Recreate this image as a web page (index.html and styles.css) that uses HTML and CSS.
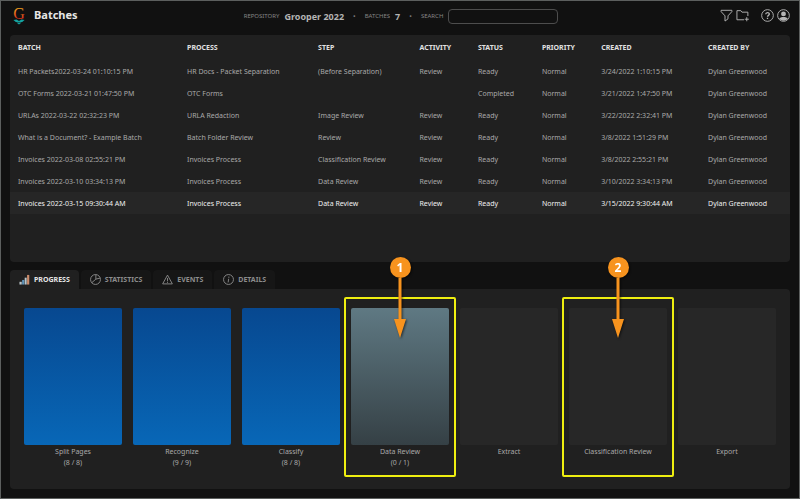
FILE: index.html
```html
<!DOCTYPE html>
<html lang="en">
<head>
    <meta charset="UTF-8">
    <meta name="viewport" content="width=device-width, initial-scale=1.0">
    <title>Batches</title>
    <link rel="stylesheet" href="styles.css">
</head>
<body>
    <header class="topbar">
        <div class="brand">
            <svg class="logo" viewBox="0 0 14 18">
                <defs>
                    <linearGradient id="logoFill" x1="0" y1="0" x2="0" y2="1">
                        <stop offset="0.2" stop-color="#f0a020"/>
                        <stop offset="0.8" stop-color="#d8301c"/>
                    </linearGradient>
                </defs>
                <text class="logo-letter" x="7" y="12" text-anchor="middle" fill="url(#logoFill)">G</text>
                <path d="M1.4 13L4.5 12.6L7 14L9.5 12.6L12.6 13L10.2 15H3.8ZM4.4 15.4H9.6L7 17.4Z" fill="#14a3a0"/>
            </svg>
            <h1>Batches</h1>
        </div>
        <div class="summary">
            <span class="caption">REPOSITORY</span>
            <strong>Grooper 2022</strong>
            <span class="dot">•</span>
            <span class="caption">BATCHES</span>
            <strong>7</strong>
            <span class="dot">•</span>
            <label class="caption" for="search">SEARCH</label>
            <input type="text" id="search">
        </div>
        <div class="actions">
            <button type="button" aria-label="Filter">
                <svg viewBox="0 0 14 14"><path d="M1.2 1.4H12.8V2.8L8.6 7.4V10.6L5.4 13V7.4L1.2 2.8Z"/></svg>
            </button>
            <button type="button" class="new-batch" aria-label="New batch">
                <svg viewBox="0 0 14 14"><path d="M8.6 11.6H1V1.8H5.2L6.4 3.4H12.8V7.6M11.6 8.8V13.2M9.4 11H13.8"/></svg>
            </button>
            <button type="button" aria-label="Help">
                <svg viewBox="0 0 14 14"><circle cx="7" cy="7" r="6.3"/><path d="M5.1 5.7C5.1 3.2 9 3.2 9 5.5C9 6.9 7 6.9 7 8.4M7 9.4V10.8" stroke-width="1.4"/></svg>
            </button>
            <button type="button" aria-label="Account">
                <svg viewBox="0 0 14 14"><circle cx="7" cy="7" r="6.3"/><circle class="solid" cx="7" cy="5.3" r="2.6"/><path class="solid" d="M2.4 10.6C3.4 8 10.6 8 11.6 10.6C9.8 13.2 4.2 13.2 2.4 10.6Z"/></svg>
            </button>
        </div>
    </header>

    <main>
        <section class="panel batches">
            <table>
                <colgroup>
                    <col class="col-batch"><col class="col-process"><col class="col-step"><col class="col-activity">
                    <col class="col-status"><col class="col-priority"><col class="col-created"><col class="col-by">
                </colgroup>
                <thead>
                    <tr><th>BATCH</th><th>PROCESS</th><th>STEP</th><th>ACTIVITY</th><th>STATUS</th><th>PRIORITY</th><th>CREATED</th><th>CREATED BY</th></tr>
                </thead>
                <tbody>
                    <tr><td>HR Packets2022-03-24 01:10:15 PM</td><td>HR Docs - Packet Separation</td><td>(Before Separation)</td><td>Review</td><td>Ready</td><td>Normal</td><td>3/24/2022 1:10:15 PM</td><td>Dylan Greenwood</td></tr>
                    <tr><td>OTC Forms 2022-03-21 01:47:50 PM</td><td>OTC Forms</td><td></td><td></td><td>Completed</td><td>Normal</td><td>3/21/2022 1:47:50 PM</td><td>Dylan Greenwood</td></tr>
                    <tr><td>URLAs 2022-03-22 02:32:23 PM</td><td>URLA Redaction</td><td>Image Review</td><td>Review</td><td>Ready</td><td>Normal</td><td>3/22/2022 2:32:41 PM</td><td>Dylan Greenwood</td></tr>
                    <tr><td>What is a Document? - Example Batch</td><td>Batch Folder Review</td><td>Review</td><td>Review</td><td>Ready</td><td>Normal</td><td>3/8/2022 1:51:29 PM</td><td>Dylan Greenwood</td></tr>
                    <tr><td>Invoices 2022-03-08 02:55:21 PM</td><td>Invoices Process</td><td>Classification Review</td><td>Review</td><td>Ready</td><td>Normal</td><td>3/8/2022 2:55:21 PM</td><td>Dylan Greenwood</td></tr>
                    <tr><td>Invoices 2022-03-10 03:34:13 PM</td><td>Invoices Process</td><td>Data Review</td><td>Review</td><td>Ready</td><td>Normal</td><td>3/10/2022 3:34:13 PM</td><td>Dylan Greenwood</td></tr>
                    <tr class="selected"><td>Invoices 2022-03-15 09:30:44 AM</td><td>Invoices Process</td><td>Data Review</td><td>Review</td><td>Ready</td><td>Normal</td><td>3/15/2022 9:30:44 AM</td><td>Dylan Greenwood</td></tr>
                </tbody>
            </table>
        </section>

        <nav class="tabs">
            <button type="button" class="tab active">
                <svg viewBox="0 0 12 12"><path class="bar-a" d="M0.5 8.5H3V11.5H0.5Z"/><path class="bar-b" d="M3.4 6.5H5.8V11.5H3.4Z"/><path class="bar-a" d="M6.2 4H8.4V11.5H6.2Z"/><path class="bar-c" d="M8.8 1H11.2V11.5H8.8Z"/></svg>
                PROGRESS
            </button>
            <button type="button" class="tab">
                <svg viewBox="0 0 12 12"><circle cx="6" cy="6" r="5.4"/><path d="M6.4 0.6V5.6L2 9.4M6.4 5.6L11.2 4.4"/></svg>
                STATISTICS
            </button>
            <button type="button" class="tab">
                <svg viewBox="0 0 12 12"><path d="M6 1.2L11.3 10.8H0.7ZM6 4.4V7.6M6 8.4V9.6"/></svg>
                EVENTS
            </button>
            <button type="button" class="tab">
                <svg viewBox="0 0 12 12"><circle cx="6" cy="6" r="5.4"/><path d="M6.4 2.8V4.2M6.2 5.2L5.6 9.2"/></svg>
                DETAILS
            </button>
        </nav>

        <section class="panel steps">
            <div class="step done">
                <div class="tile"></div>
                <p>Split Pages<br>(8 / 8)</p>
            </div>
            <div class="step done">
                <div class="tile"></div>
                <p>Recognize<br>(9 / 9)</p>
            </div>
            <div class="step done">
                <div class="tile"></div>
                <p>Classify<br>(8 / 8)</p>
            </div>
            <div class="step ready marked">
                <div class="tile"></div>
                <p>Data Review<br>(0 / 1)</p>
                <div class="callout">
                    <span class="number">1</span>
                    <svg class="arrow" viewBox="0 0 12 60"><path d="M4.5 0H7.5V41H12L6 60L0 41H4.5Z"/></svg>
                </div>
            </div>
            <div class="step">
                <div class="tile"></div>
                <p>Extract</p>
            </div>
            <div class="step marked">
                <div class="tile"></div>
                <p>Classification Review</p>
                <div class="callout">
                    <span class="number">2</span>
                    <svg class="arrow" viewBox="0 0 12 60"><path d="M4.5 0H7.5V41H12L6 60L0 41H4.5Z"/></svg>
                </div>
            </div>
            <div class="step">
                <div class="tile"></div>
                <p>Export</p>
            </div>
        </section>
    </main>
</body>
</html>
```

FILE: styles.css
```css
* {
    margin: 0;
    padding: 0;
    box-sizing: border-box;
}

body {
    font-family: "Noto Sans", "Open Sans", sans-serif;
    font-size: 7px;
    color: #a9a9a9;
    background-color: #111;
    border: 1px solid #5c5f5e;
    min-height: 100vh;
    display: flex;
    flex-direction: column;
}

button, input {
    font: inherit;
    color: inherit;
    background: none;
    border: none;
}

svg {
    display: block;
    fill: none;
    stroke: currentColor;
}

/* Top bar */
.topbar {
    display: grid;
    grid-template-columns: 1fr auto 1fr;
    align-items: center;
    height: 34px;
    padding: 0 9px 4px 11px;
}

.brand {
    display: flex;
    align-items: center;
    gap: 8px;
}

.logo {
    width: 14px;
    height: 18px;
    stroke: none;
    overflow: visible;
}

.logo-letter {
    font-family: "Liberation Serif", serif;
    font-size: 16px;
}

h1 {
    font-size: 11px;
    line-height: 16px;
    padding-bottom: 2px;
    color: #e6e6e6;
}

.summary {
    display: flex;
    align-items: center;
    gap: 5px;
}

.summary strong {
    font-size: 9px;
    color: #b4b4b4;
}

.caption {
    font-size: 6px;
    color: #858585;
}

.dot {
    padding: 0 4px;
    color: #777;
}

#search {
    width: 110px;
    height: 15px;
    padding: 0 5px;
    border: 1px solid #4d4d4d;
    border-radius: 4px;
}

.actions {
    display: flex;
    justify-content: flex-end;
    gap: 3px;
    padding-bottom: 2px;
    color: #b5b5b5;
}

.actions svg {
    width: 13px;
    height: 13px;
}

.actions .new-batch {
    margin-right: 9px;
}

.solid {
    fill: currentColor;
    stroke: none;
}

/* Panels */
main {
    flex: 1;
    display: flex;
    flex-direction: column;
    padding: 0 9px 9px;
}

.panel {
    background-color: #202020;
    border-radius: 4px;
}

.batches {
    flex: 1;
}

table {
    width: 100%;
    table-layout: fixed;
    border-collapse: collapse;
}

.col-batch { width: 22.7%; }
.col-process { width: 16.8%; }
.col-step { width: 13%; }
.col-activity { width: 7.5%; }
.col-status { width: 8.2%; }
.col-priority { width: 7.6%; }
.col-created { width: 13.7%; }
.col-by { width: 10.5%; }

th, td {
    height: 22px;
    text-align: left;
    white-space: nowrap;
}

th {
    height: 25px;
    color: #e0e0e0;
}

th:first-child, td:first-child {
    padding-left: 8px;
}

.selected {
    color: #f0f0f0;
    background-color: #262626;
}

/* Tabs */
.tabs {
    display: flex;
    gap: 2px;
    margin-top: 8px;
}

.tab {
    display: flex;
    align-items: center;
    gap: 4px;
    height: 19px;
    padding: 0 9px;
    font-weight: 700;
    color: #8c8c8c;
    background-color: #161616;
    border-radius: 4px 4px 0 0;
}

.tab svg {
    width: 11px;
    height: 11px;
}

.tab.active {
    color: #e6e6e6;
    background-color: #202020;
}

.tab path[class] {
    stroke: none;
}

.bar-a { fill: #b9c4c9; }
.bar-b { fill: #5f93b8; }
.bar-c { fill: #c98a6a; }

/* Steps */
.steps {
    display: grid;
    grid-template-columns: repeat(7, 1fr);
    gap: 11px;
    padding: 19px 14px 21px;
    border-top-left-radius: 0;
}

.step {
    position: relative;
    text-align: center;
    line-height: 11px;
}

.tile {
    height: 137px;
    margin-bottom: 1px;
    background-color: #272727;
    border-radius: 2px;
}

.done .tile {
    background: linear-gradient(#074890, #0867b7);
}

.ready .tile {
    background: linear-gradient(#5f7983, #354045);
}

.marked::after {
    content: "";
    position: absolute;
    inset: -11px -7px -9px;
    border: 2px solid #eeee10;
    border-radius: 2px;
}

.callout {
    position: absolute;
    z-index: 1;
    top: -51px;
    left: 0;
    right: 0;
    display: flex;
    flex-direction: column;
    align-items: center;
    filter: drop-shadow(1px 1px 1px rgba(0, 0, 0, 0.6));
}

.number {
    width: 21px;
    height: 21px;
    font-size: 12px;
    font-weight: 700;
    line-height: 21px;
    color: #fff;
    background-color: #f7931e;
    border-radius: 50%;
}

.arrow {
    width: 12px;
    height: 60px;
    fill: #f7931e;
    stroke: none;
}
```
